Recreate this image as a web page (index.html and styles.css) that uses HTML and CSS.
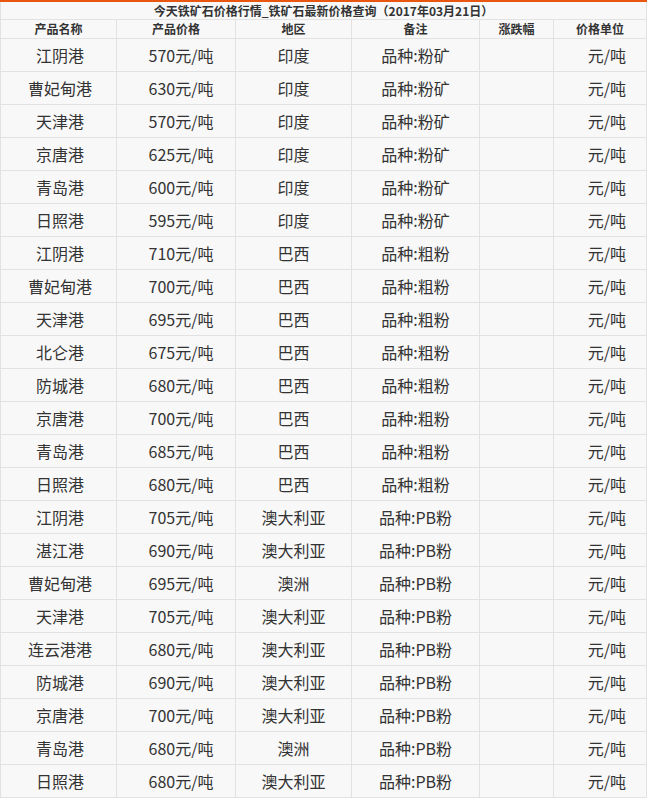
FILE: index.html
```html
<!DOCTYPE html>
<html lang="zh-CN">
<head>
<meta charset="utf-8">
<title>铁矿石价格</title>
<link rel="stylesheet" href="styles.css">
</head>
<body>
<table class="price-table">
  <colgroup>
    <col class="c1"><col class="c2"><col class="c3"><col class="c4"><col class="c5"><col class="c6">
  </colgroup>
  <thead>
    <tr class="title-row"><th colspan="6">今天铁矿石价格行情_铁矿石最新价格查询（2017年03月21日）</th></tr>
    <tr class="head-row"><th>产品名称</th><th>产品价格</th><th>地区</th><th>备注</th><th>涨跌幅</th><th>价格单位</th></tr>
  </thead>
  <tbody>
    <tr><td>江阴港</td><td>570元/吨</td><td>印度</td><td>品种:粉矿</td><td></td><td class="unit">元/吨</td></tr>
    <tr><td>曹妃甸港</td><td>630元/吨</td><td>印度</td><td>品种:粉矿</td><td></td><td class="unit">元/吨</td></tr>
    <tr><td>天津港</td><td>570元/吨</td><td>印度</td><td>品种:粉矿</td><td></td><td class="unit">元/吨</td></tr>
    <tr><td>京唐港</td><td>625元/吨</td><td>印度</td><td>品种:粉矿</td><td></td><td class="unit">元/吨</td></tr>
    <tr><td>青岛港</td><td>600元/吨</td><td>印度</td><td>品种:粉矿</td><td></td><td class="unit">元/吨</td></tr>
    <tr><td>日照港</td><td>595元/吨</td><td>印度</td><td>品种:粉矿</td><td></td><td class="unit">元/吨</td></tr>
    <tr><td>江阴港</td><td>710元/吨</td><td>巴西</td><td>品种:粗粉</td><td></td><td class="unit">元/吨</td></tr>
    <tr><td>曹妃甸港</td><td>700元/吨</td><td>巴西</td><td>品种:粗粉</td><td></td><td class="unit">元/吨</td></tr>
    <tr><td>天津港</td><td>695元/吨</td><td>巴西</td><td>品种:粗粉</td><td></td><td class="unit">元/吨</td></tr>
    <tr><td>北仑港</td><td>675元/吨</td><td>巴西</td><td>品种:粗粉</td><td></td><td class="unit">元/吨</td></tr>
    <tr><td>防城港</td><td>680元/吨</td><td>巴西</td><td>品种:粗粉</td><td></td><td class="unit">元/吨</td></tr>
    <tr><td>京唐港</td><td>700元/吨</td><td>巴西</td><td>品种:粗粉</td><td></td><td class="unit">元/吨</td></tr>
    <tr><td>青岛港</td><td>685元/吨</td><td>巴西</td><td>品种:粗粉</td><td></td><td class="unit">元/吨</td></tr>
    <tr><td>日照港</td><td>680元/吨</td><td>巴西</td><td>品种:粗粉</td><td></td><td class="unit">元/吨</td></tr>
    <tr><td>江阴港</td><td>705元/吨</td><td>澳大利亚</td><td>品种:PB粉</td><td></td><td class="unit">元/吨</td></tr>
    <tr><td>湛江港</td><td>690元/吨</td><td>澳大利亚</td><td>品种:PB粉</td><td></td><td class="unit">元/吨</td></tr>
    <tr><td>曹妃甸港</td><td>695元/吨</td><td>澳洲</td><td>品种:PB粉</td><td></td><td class="unit">元/吨</td></tr>
    <tr><td>天津港</td><td>705元/吨</td><td>澳大利亚</td><td>品种:PB粉</td><td></td><td class="unit">元/吨</td></tr>
    <tr><td>连云港港</td><td>680元/吨</td><td>澳大利亚</td><td>品种:PB粉</td><td></td><td class="unit">元/吨</td></tr>
    <tr><td>防城港</td><td>690元/吨</td><td>澳大利亚</td><td>品种:PB粉</td><td></td><td class="unit">元/吨</td></tr>
    <tr><td>京唐港</td><td>700元/吨</td><td>澳大利亚</td><td>品种:PB粉</td><td></td><td class="unit">元/吨</td></tr>
    <tr><td>青岛港</td><td>680元/吨</td><td>澳洲</td><td>品种:PB粉</td><td></td><td class="unit">元/吨</td></tr>
    <tr><td>日照港</td><td>680元/吨</td><td>澳大利亚</td><td>品种:PB粉</td><td></td><td class="unit">元/吨</td></tr>
  </tbody>
</table>
</body>
</html>
```

FILE: styles.css
```css
html, body {
  margin: 0;
  padding: 0;
  background: #ffffff;
}
body {
  font-family: "Noto Sans CJK SC", "Noto Sans", sans-serif;
  color: #333333;
}
.price-table {
  width: 646px;
  border-collapse: collapse;
  table-layout: fixed;
  background: #f8f8f8;
  border-top: 2px solid #e8560f;
}
.c1 { width: 116px; }
.c2 { width: 119px; }
.c3 { width: 116px; }
.c4 { width: 128px; }
.c5 { width: 74px; }
.c6 { width: 93px; }
.price-table th,
.price-table td {
  padding: 0;
  text-align: center;
  border: 1px solid #e2e2e2;
  overflow: hidden;
  white-space: nowrap;
}
.price-table th {
  font-size: 12px;
  font-weight: bold;
  line-height: 16px;
  color: #333333;
}
.title-row th {
  height: 17px;
}
.head-row th {
  height: 18px;
  border-right: 1px dashed #dcdcdc;
}
.head-row th:last-child {
  border-right: 1px solid #e2e2e2;
}
.price-table td {
  font-size: 16px;
  height: 32px;
  line-height: 20px;
}
.price-table td:first-child {
  padding-left: 3px;
}
.price-table td:nth-child(2) {
  padding-left: 10px;
}
.price-table td.unit {
  text-align: right;
  padding-right: 20px;
}
```
